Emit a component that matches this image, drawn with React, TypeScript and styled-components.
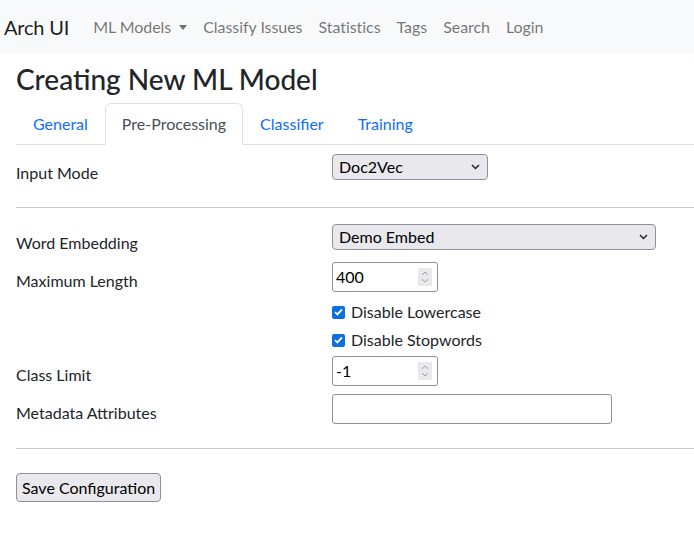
import React from "react";
import styled, { createGlobalStyle } from "styled-components";

const GlobalStyle = createGlobalStyle`
  html, body { margin: 0; padding: 0; background: #fff; }
  body {
    font-family: Lato, "Noto Sans", sans-serif;
    font-size: 16px;
    line-height: 1.5;
    color: #212529;
  }
  * { box-sizing: border-box; }
`;

const Navbar = styled.nav`
  height: 53px;
  background: #f8f9fa;
  display: flex;
  align-items: center;
  padding: 0 4px;
`;

const Brand = styled.a`
  font-size: 20px;
  color: rgba(0, 0, 0, 0.9);
  margin-right: 16px;
  text-decoration: none;
  line-height: 30px;
  letter-spacing: -0.2px;
`;

const NavList = styled.ul`
  display: flex;
  list-style: none;
  margin: 0;
  padding: 0;
`;

const NavLink = styled.a`
  display: block;
  padding: 8px;
  color: rgba(0, 0, 0, 0.55);
  text-decoration: none;
  line-height: 24px;
  letter-spacing: -0.05px;
`;

const Caret = styled.span`
  display: inline-block;
  margin-left: 8px;
  vertical-align: 3px;
  border-top: 5px solid rgba(0, 0, 0, 0.55);
  border-left: 4px solid transparent;
  border-right: 4px solid transparent;
`;

const Main = styled.main`
  padding-left: 16px;
`;

const Title = styled.h1`
  font-size: 28px;
  font-weight: 500;
  line-height: 34px;
  margin: 9px 0 7px;
`;

const Tabs = styled.ul`
  display: flex;
  list-style: none;
  margin: 0;
  padding: 0;
  border-bottom: 1px solid #dee2e6;
`;

const Tab = styled.li<{ $active?: boolean }>`
  margin-bottom: -1px;
  padding: 8px 16px;
  line-height: 24px;
  border: 1px solid ${(p) => (p.$active ? "#dee2e6" : "transparent")};
  border-bottom-color: ${(p) => (p.$active ? "#fff" : "transparent")};
  border-radius: 6px 6px 0 0;
  background: ${(p) => (p.$active ? "#fff" : "transparent")};
  color: ${(p) => (p.$active ? "#495057" : "#0d6efd")};
`;

const TabPane = styled.section`
  padding-top: 9px;
`;

const FormRow = styled.div`
  display: grid;
  grid-template-columns: 316px 1fr;
  align-items: start;
`;

const Label = styled.label`
  padding: 7px 0;
  line-height: 24px;
`;

const Control = styled.div<{ $offset?: boolean }>`
  grid-column: ${(p) => (p.$offset ? "2" : "auto")};
`;

const Rule = styled.hr<{ $mt: number; $mb: number }>`
  border: 0;
  border-top: 1px solid #c8c9ca;
  margin: ${(p) => p.$mt}px 0 ${(p) => p.$mb}px;
`;

const SelectWrap = styled.div<{ $w: number }>`
  position: relative;
  width: ${(p) => p.$w}px;
  height: 26px;
  svg {
    position: absolute;
    right: 8px;
    top: 10px;
    pointer-events: none;
  }
`;

const Select = styled.select`
  appearance: none;
  width: 100%;
  height: 100%;
  margin: 0;
  padding: 0 6px;
  font: inherit;
  line-height: 24px;
  color: #000;
  background: #e9e9ed;
  border: 1px solid #8f8f9d;
  border-radius: 4px;
`;

const Field = styled.div<{ $w: number; $h: number }>`
  display: flex;
  align-items: center;
  width: ${(p) => p.$w}px;
  height: ${(p) => p.$h}px;
  border: 1px solid #8f8f9d;
  border-radius: 3px;
  background: #fff;
  padding: 0 5px 0 3px;
`;

const FieldInput = styled.input`
  flex: 1;
  min-width: 0;
  border: 0;
  outline: none;
  padding: 0;
  font: inherit;
  color: #000;
  background: transparent;
`;

const Spinner = styled.span`
  display: flex;
  flex-direction: column;
  align-items: center;
  justify-content: space-around;
  width: 14px;
  height: 18px;
  background: #e9e9ed;
  border-radius: 1px;
  padding: 2px 0;
`;

const CheckRow = styled.label`
  display: flex;
  align-items: center;
  gap: 6px;
  height: 24px;
  margin-bottom: 4px;
  line-height: 24px;
`;

const Box = styled.span`
  display: inline-flex;
  align-items: center;
  justify-content: center;
  width: 13px;
  height: 13px;
  border-radius: 2px;
  background: #0b6fe0;
`;

const Button = styled.button`
  height: 29px;
  padding: 0 5px;
  font: inherit;
  line-height: 24px;
  color: #000;
  background: #e9e9ed;
  border: 1px solid #8f8f9d;
  border-radius: 4px;
`;

const Chevron = () => (
  <svg width="9" height="6" viewBox="0 0 9 6">
    <path d="M1 1 L4.5 4.5 L8 1" fill="none" stroke="#222" strokeWidth="1.5" />
  </svg>
);

const NumberField = ({ value }: { value: string }) => (
  <Field $w={106} $h={30}>
    <FieldInput type="text" inputMode="numeric" defaultValue={value} />
    <Spinner>
      <svg width="8" height="5" viewBox="0 0 8 5">
        <path d="M1 4 L4 1 L7 4" fill="none" stroke="#a0a0a8" strokeWidth="1" />
      </svg>
      <svg width="8" height="5" viewBox="0 0 8 5">
        <path d="M1 1 L4 4 L7 1" fill="none" stroke="#a0a0a8" strokeWidth="1" />
      </svg>
    </Spinner>
  </Field>
);

const Check = ({ label }: { label: string }) => (
  <CheckRow>
    <Box>
      <svg width="9" height="8" viewBox="0 0 9 8">
        <path d="M1 4.2 L3.4 6.4 L8 1.4" fill="none" stroke="#fff" strokeWidth="1.8" />
      </svg>
    </Box>
    {label}
  </CheckRow>
);

export default function App() {
  return (
    <>
      <GlobalStyle />
      <Navbar>
        <Brand href="#">Arch UI</Brand>
        <NavList>
          <li>
            <NavLink href="#">
              ML Models
              <Caret />
            </NavLink>
          </li>
          <li><NavLink href="#">Classify Issues</NavLink></li>
          <li><NavLink href="#">Statistics</NavLink></li>
          <li><NavLink href="#">Tags</NavLink></li>
          <li><NavLink href="#">Search</NavLink></li>
          <li><NavLink href="#">Login</NavLink></li>
        </NavList>
      </Navbar>
      <Main>
        <Title>Creating New ML Model</Title>
        <Tabs>
          <Tab>General</Tab>
          <Tab $active>Pre-Processing</Tab>
          <Tab>Classifier</Tab>
          <Tab>Training</Tab>
        </Tabs>
        <TabPane>
          <FormRow>
            <Label>Input Mode</Label>
            <Control>
              <SelectWrap $w={156}>
                <Select defaultValue="Doc2Vec">
                  <option>Doc2Vec</option>
                  <option>Word Embedding</option>
                </Select>
                <Chevron />
              </SelectWrap>
            </Control>
          </FormRow>
          <Rule $mt={15} $mb={16} />
          <FormRow>
            <Label>Word Embedding</Label>
            <Control>
              <SelectWrap $w={324}>
                <Select defaultValue="Demo Embed">
                  <option>Demo Embed</option>
                </Select>
                <Chevron />
              </SelectWrap>
            </Control>
          </FormRow>
          <FormRow>
            <Label>Maximum Length</Label>
            <Control>
              <NumberField value="400" />
            </Control>
          </FormRow>
          <FormRow>
            <Control $offset>
              <Check label="Disable Lowercase" />
              <Check label="Disable Stopwords" />
            </Control>
          </FormRow>
          <FormRow>
            <Label>Class Limit</Label>
            <Control>
              <NumberField value="-1" />
            </Control>
          </FormRow>
          <FormRow>
            <Label>Metadata Attributes</Label>
            <Control>
              <Field $w={280} $h={30}>
                <FieldInput type="text" defaultValue="" />
              </Field>
            </Control>
          </FormRow>
          <Rule $mt={16} $mb={24} />
          <Button type="button">Save Configuration</Button>
        </TabPane>
      </Main>
    </>
  );
}
